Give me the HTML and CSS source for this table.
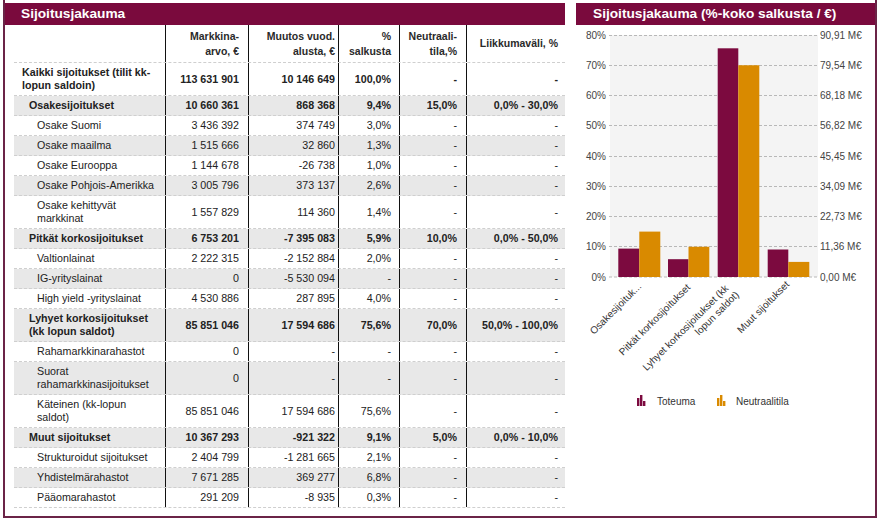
FILE: index.html
```html
<!DOCTYPE html>
<html lang="fi">
<head>
<meta charset="utf-8">
<title>Sijoitusjakauma</title>
<link rel="stylesheet" href="styles.css">
</head>
<body>
<div class="frame">
  <section class="panel left">
    <h2 class="bar">Sijoitusjakauma</h2>
    <div class="table">
      <div class="row head">
        <div class="c lab"></div>
        <div class="c n1">Markkina-<br>arvo, €</div>
        <div class="c n2">Muutos vuod.<br>alusta, €</div>
        <div class="c n3">%<br>salkusta</div>
        <div class="c n4">Neutraali-<br>tila,%</div>
        <div class="c n5">Liikkumaväli, %</div>
      </div>
      <div class="row dbl total"><div class="c lab">Kaikki sijoitukset (tilit kk-<br>lopun saldoin)</div><div class="c n1">113 631 901</div><div class="c n2">10 146 649</div><div class="c n3">100,0%</div><div class="c n4">-</div><div class="c n5">-</div></div>
      <div class="row grp alt"><div class="c lab">Osakesijoitukset</div><div class="c n1">10 660 361</div><div class="c n2">868 368</div><div class="c n3">9,4%</div><div class="c n4">15,0%</div><div class="c n5">0,0% - 30,0%</div></div>
      <div class="row sub"><div class="c lab">Osake Suomi</div><div class="c n1">3 436 392</div><div class="c n2">374 749</div><div class="c n3">3,0%</div><div class="c n4">-</div><div class="c n5">-</div></div>
      <div class="row sub alt"><div class="c lab">Osake maailma</div><div class="c n1">1 515 666</div><div class="c n2">32 860</div><div class="c n3">1,3%</div><div class="c n4">-</div><div class="c n5">-</div></div>
      <div class="row sub"><div class="c lab">Osake Eurooppa</div><div class="c n1">1 144 678</div><div class="c n2">-26 738</div><div class="c n3">1,0%</div><div class="c n4">-</div><div class="c n5">-</div></div>
      <div class="row sub alt"><div class="c lab">Osake Pohjois-Amerikka</div><div class="c n1">3 005 796</div><div class="c n2">373 137</div><div class="c n3">2,6%</div><div class="c n4">-</div><div class="c n5">-</div></div>
      <div class="row sub dbl"><div class="c lab">Osake kehittyvät<br>markkinat</div><div class="c n1">1 557 829</div><div class="c n2">114 360</div><div class="c n3">1,4%</div><div class="c n4">-</div><div class="c n5">-</div></div>
      <div class="row grp alt"><div class="c lab">Pitkät korkosijoitukset</div><div class="c n1">6 753 201</div><div class="c n2">-7 395 083</div><div class="c n3">5,9%</div><div class="c n4">10,0%</div><div class="c n5">0,0% - 50,0%</div></div>
      <div class="row sub"><div class="c lab">Valtionlainat</div><div class="c n1">2 222 315</div><div class="c n2">-2 152 884</div><div class="c n3">2,0%</div><div class="c n4">-</div><div class="c n5">-</div></div>
      <div class="row sub alt"><div class="c lab">IG-yrityslainat</div><div class="c n1">0</div><div class="c n2">-5 530 094</div><div class="c n3">-</div><div class="c n4">-</div><div class="c n5">-</div></div>
      <div class="row sub"><div class="c lab">High yield -yrityslainat</div><div class="c n1">4 530 886</div><div class="c n2">287 895</div><div class="c n3">4,0%</div><div class="c n4">-</div><div class="c n5">-</div></div>
      <div class="row grp dbl alt"><div class="c lab">Lyhyet korkosijoitukset<br>(kk lopun saldot)</div><div class="c n1">85 851 046</div><div class="c n2">17 594 686</div><div class="c n3">75,6%</div><div class="c n4">70,0%</div><div class="c n5">50,0% - 100,0%</div></div>
      <div class="row sub"><div class="c lab">Rahamarkkinarahastot</div><div class="c n1">0</div><div class="c n2">-</div><div class="c n3">-</div><div class="c n4">-</div><div class="c n5">-</div></div>
      <div class="row sub dbl alt"><div class="c lab">Suorat<br>rahamarkkinasijoitukset</div><div class="c n1">0</div><div class="c n2">-</div><div class="c n3">-</div><div class="c n4">-</div><div class="c n5">-</div></div>
      <div class="row sub dbl"><div class="c lab">Käteinen (kk-lopun<br>saldot)</div><div class="c n1">85 851 046</div><div class="c n2">17 594 686</div><div class="c n3">75,6%</div><div class="c n4">-</div><div class="c n5">-</div></div>
      <div class="row grp alt"><div class="c lab">Muut sijoitukset</div><div class="c n1">10 367 293</div><div class="c n2">-921 322</div><div class="c n3">9,1%</div><div class="c n4">5,0%</div><div class="c n5">0,0% - 10,0%</div></div>
      <div class="row sub"><div class="c lab">Strukturoidut sijoitukset</div><div class="c n1">2 404 799</div><div class="c n2">-1 281 665</div><div class="c n3">2,1%</div><div class="c n4">-</div><div class="c n5">-</div></div>
      <div class="row sub alt"><div class="c lab">Yhdistelmärahastot</div><div class="c n1">7 671 285</div><div class="c n2">369 277</div><div class="c n3">6,8%</div><div class="c n4">-</div><div class="c n5">-</div></div>
      <div class="row sub"><div class="c lab">Pääomarahastot</div><div class="c n1">291 209</div><div class="c n2">-8 935</div><div class="c n3">0,3%</div><div class="c n4">-</div><div class="c n5">-</div></div>
    </div>
  </section>
  <section class="panel right">
    <h2 class="bar">Sijoitusjakauma (%-koko salkusta / €)</h2>
    <svg class="chart" width="299" height="490" viewBox="576 25 299 490" xmlns="http://www.w3.org/2000/svg">
      <rect x="610" y="35" width="208" height="242" fill="#f4f4f4"/>
      <g stroke="#b8b8b8" stroke-width="1" stroke-dasharray="3 2">
        <line x1="609" x2="818" y1="35.5" y2="35.5"/>
        <line x1="609" x2="818" y1="65.5" y2="65.5"/>
        <line x1="609" x2="818" y1="95.5" y2="95.5"/>
        <line x1="609" x2="818" y1="125.5" y2="125.5"/>
        <line x1="609" x2="818" y1="156.5" y2="156.5"/>
        <line x1="609" x2="818" y1="186.5" y2="186.5"/>
        <line x1="609" x2="818" y1="216.5" y2="216.5"/>
        <line x1="609" x2="818" y1="246.5" y2="246.5"/>
        <line x1="609" x2="818" y1="277" y2="277"/>
      </g>
      <g class="ax" text-anchor="end">
        <text x="606" y="38.5">80%</text>
        <text x="606" y="68.7">70%</text>
        <text x="606" y="99">60%</text>
        <text x="606" y="129.2">50%</text>
        <text x="606" y="159.5">40%</text>
        <text x="606" y="189.7">30%</text>
        <text x="606" y="220">20%</text>
        <text x="606" y="250.2">10%</text>
        <text x="606" y="280.5">0%</text>
      </g>
      <g class="ax">
        <text x="820" y="38.5">90,91 M€</text>
        <text x="820" y="68.7">79,54 M€</text>
        <text x="820" y="99">68,18 M€</text>
        <text x="820" y="129.2">56,82 M€</text>
        <text x="820" y="159.5">45,45 M€</text>
        <text x="820" y="189.7">34,09 M€</text>
        <text x="820" y="220">22,73 M€</text>
        <text x="820" y="250.2">11,36 M€</text>
        <text x="820" y="280.5">0,00 M€</text>
      </g>
      <g fill="#7c0a3f">
        <rect x="618.3" y="248.6" width="21" height="28.4"/>
        <rect x="668" y="259.2" width="20.5" height="17.8"/>
        <rect x="717.7" y="48.3" width="20.6" height="228.7"/>
        <rect x="767.7" y="249.5" width="20.6" height="27.5"/>
      </g>
      <g fill="#d98a00">
        <rect x="639.3" y="231.6" width="21" height="45.4"/>
        <rect x="688.5" y="246.75" width="20.8" height="30.25"/>
        <rect x="738.3" y="65.25" width="21" height="211.75"/>
        <rect x="788.3" y="261.9" width="21" height="15.1"/>
      </g>
      <g class="xl" text-anchor="end">
        <text transform="translate(642 287) rotate(-45)">Osakesijoituk...</text>
        <text transform="translate(691 288) rotate(-45)">Pitkät korkosijoitukset</text>
        <text transform="translate(729 289) rotate(-45)"><tspan x="0" y="0">Lyhyet korkosijoitukset (kk</tspan><tspan x="3" y="12">lopun saldot)</tspan></text>
        <text transform="translate(790 285) rotate(-45)">Muut sijoitukset</text>
      </g>
      <g fill="#7c0a3f">
        <rect x="637" y="398" width="2.4" height="8"/>
        <rect x="640" y="395" width="2.4" height="11"/>
        <rect x="643" y="401" width="2.4" height="5"/>
      </g>
      <g fill="#d98a00">
        <rect x="717" y="398" width="2.4" height="8"/>
        <rect x="720" y="395" width="2.4" height="11"/>
        <rect x="723" y="401" width="2.4" height="5"/>
      </g>
      <g class="lg">
        <text x="657" y="404.5">Toteuma</text>
        <text x="736" y="404.5">Neutraalitila</text>
      </g>
    </svg>
  </section>
</div>
</body>
</html>
```

FILE: styles.css
```css
* { box-sizing: border-box; }
html, body { margin: 0; padding: 0; background: #fff; }
body {
  width: 880px;
  height: 520px;
  font-family: "Liberation Sans", Arial, sans-serif;
  color: #222;
}
.frame {
  margin-left: 3px;
  width: 874px;
  height: 518px;
  border: 2px solid #6b2447;
  border-top: none;
  display: flex;
  gap: 11px;
}
.panel { padding-top: 3px; }
.panel.left { width: 560px; }
.panel.right { width: 299px; }
.bar {
  margin: 0;
  height: 22px;
  background: #7a0a3d;
  color: #fff;
  font-size: 13.7px;
  font-weight: bold;
  line-height: 22px;
  padding-left: 16px;
  white-space: nowrap;
}
.right .bar { padding-left: 17px; }
.table {
  margin-left: 9px;
  width: 551px;
  font-size: 10.7px;
}
.row {
  display: grid;
  grid-template-columns: 151px 83px 90px 61px 67px 99px;
  height: 20px;
  border-bottom: 1px dashed #cfcfcf;
  background: #fff;
}
.row.dbl { height: 33px; }
.row.alt { background: #e8e8e8; }
.row.head {
  height: 38px;
  color: #2a2a2a;
  font-size: 10.5px;
  font-weight: bold;
}
.row.total, .row.grp { font-weight: bold; }
.c {
  display: flex;
  align-items: center;
  justify-content: flex-end;
  text-align: right;
  line-height: 13px;
  border-left: 1px solid #111;
  white-space: nowrap;
}
.row.head .c { line-height: 15px; }
.c.lab {
  border-left: none;
  justify-content: flex-start;
  text-align: left;
}
.total .lab { padding-left: 8px; }
.grp .lab { padding-left: 15px; }
.sub .lab { padding-left: 23px; }
.n1 { padding-right: 9px; }
.n2 { padding-right: 3px; }
.n3 { padding-right: 8px; }
.n4 { padding-right: 9px; }
.n5 { padding-right: 7px; }
.chart { display: block; }
.ax { font-family: "Liberation Sans", Arial, sans-serif; font-size: 10px; fill: #444; }
.xl { font-family: "Liberation Sans", Arial, sans-serif; font-size: 10px; fill: #333; }
.lg { font-family: "Liberation Sans", Arial, sans-serif; font-size: 10px; fill: #333; }
```
